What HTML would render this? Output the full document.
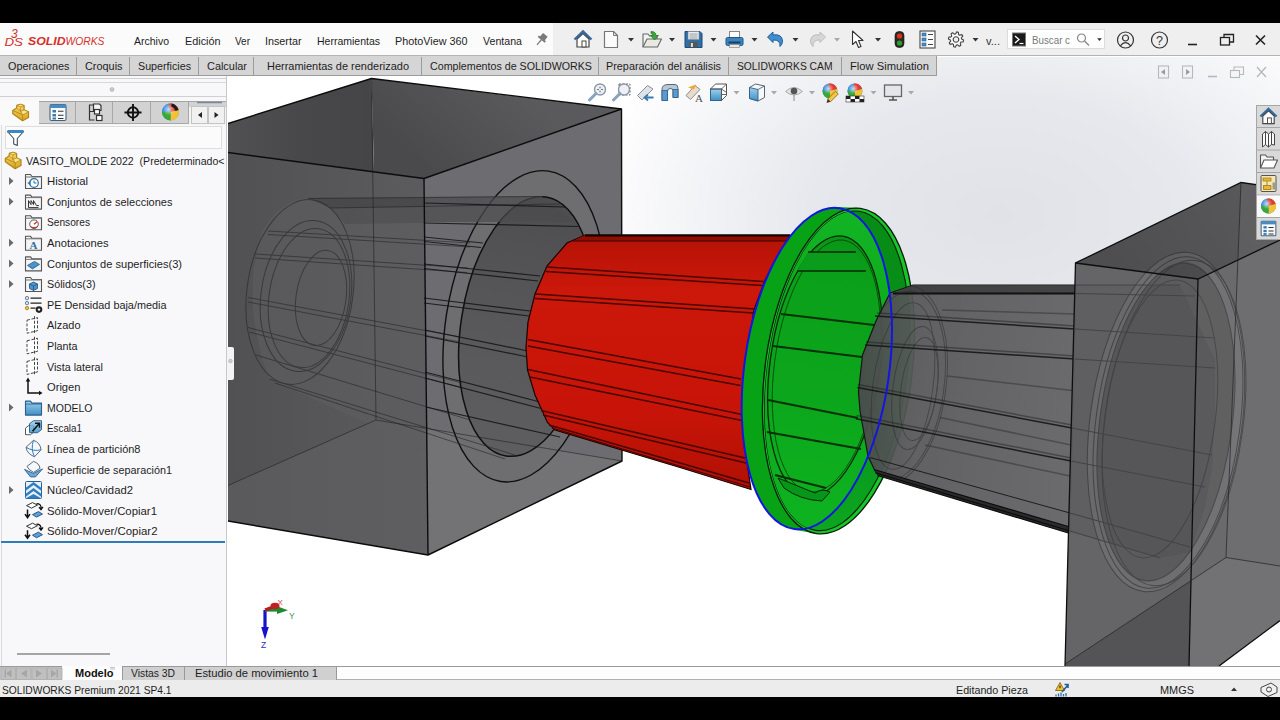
<!DOCTYPE html>
<html lang="es">
<head>
<meta charset="utf-8">
<title>SOLIDWORKS Premium 2021 - VASITO_MOLDE 2022</title>
<style>
html,body{margin:0;padding:0;width:1280px;height:720px;overflow:hidden;background:#000;}
body{position:relative;font-family:"Liberation Sans",sans-serif;}
.abs{position:absolute;}
.t{position:absolute;white-space:pre;transform-origin:0 50%;font-family:"Liberation Sans",sans-serif;}
#app{position:absolute;left:0;top:23px;width:1280px;height:674px;background:#fff;overflow:hidden;}
#menubar{position:absolute;left:0;top:23px;width:1280px;height:33px;background:#efefef;border-bottom:1px solid #b4b4b4;box-sizing:border-box;}
#menuleft{position:absolute;left:0;top:0;width:553px;height:32px;background:#fbfbfb;}
#search{position:absolute;left:1007px;top:6px;width:98px;height:20px;background:#fff;border:1px solid #dcdcdc;box-sizing:border-box;}
#cmtabs{position:absolute;left:0;top:56px;width:937px;height:20px;background:#d5d5d5;border-bottom:1px solid #9c9c9c;border-right:1px solid #9c9c9c;box-sizing:border-box;}
.sep{position:absolute;top:57px;width:1px;height:18px;background:#9c9c9c;}
#panel{position:absolute;left:0;top:76px;width:227px;height:590px;background:#f8f8fa;border-right:1px solid #c8c8c8;box-sizing:border-box;}
#ptabs{position:absolute;left:0;top:101px;width:226px;height:24px;background:#f4f4f4;}
.ptab{position:absolute;top:101px;height:23px;background:#d2d2d2;border-right:1px solid #a8a8a8;border-bottom:1px solid #a8a8a8;box-sizing:border-box;}
#filter{position:absolute;left:5px;top:126px;width:217px;height:23px;background:#fbfbfc;border:1px solid #dedede;box-sizing:border-box;}
#rollback{position:absolute;left:1px;top:541px;width:224px;height:2px;background:#2e7dba;}
#btabs{position:absolute;left:0;top:666px;width:1280px;height:14px;background:#fdfdfd;border-top:1px solid #9a9a9a;border-bottom:1px solid #b0b0b0;box-sizing:border-box;}
.btab{position:absolute;top:667px;height:13px;background:#d0d0d0;border-right:1px solid #9a9a9a;box-sizing:border-box;}
#status{position:absolute;left:0;top:680px;width:1280px;height:17px;background:#ececec;}
#taskpane{position:absolute;left:1256px;top:105px;width:24px;height:135px;background:#d9d9d9;border-left:1px solid #a6a6a6;border-top:1px solid #a6a6a6;border-bottom:1px solid #a6a6a6;box-sizing:border-box;}
#scene{position:absolute;left:0;top:0;}
#icons{position:absolute;left:0;top:0;pointer-events:none;}
</style>
</head>
<body>
<div id="app"></div>
<svg id="scene" width="1280" height="720" viewBox="0 0 1280 720">
<defs>
<radialGradient id="bgspot" gradientUnits="userSpaceOnUse" cx="1000" cy="215" r="420" gradientTransform="translate(1000 215) scale(1 0.62) translate(-1000 -215)"><stop offset="0" stop-color="#e0e2e8"/><stop offset="0.45" stop-color="#e6e8ed"/><stop offset="1" stop-color="#ffffff"/></radialGradient>
<linearGradient id="bgfade" x1="0" y1="0" x2="0" y2="1"><stop offset="0" stop-color="#fff" stop-opacity="0"/><stop offset="0.55" stop-color="#fff" stop-opacity="0"/><stop offset="0.78" stop-color="#fff" stop-opacity="1"/></linearGradient>
<linearGradient id="lbTopL" x1="0" y1="0" x2="1" y2="0"><stop offset="0" stop-color="#515153"/><stop offset="0.5" stop-color="#48484a"/><stop offset="1" stop-color="#454547"/></linearGradient>
<linearGradient id="lbTopR" gradientUnits="userSpaceOnUse" x1="520" y1="90" x2="440" y2="180"><stop offset="0" stop-color="#5a5a5c"/><stop offset="1" stop-color="#4a4a4c"/></linearGradient>
<linearGradient id="lbFront" x1="0" y1="0" x2="1" y2="0"><stop offset="0" stop-color="#515154"/><stop offset="1" stop-color="#5c5c5f"/></linearGradient>
<linearGradient id="redG" x1="0" y1="0" x2="0" y2="1"><stop offset="0" stop-color="#b41206"/><stop offset="0.22" stop-color="#cb180a"/><stop offset="0.7" stop-color="#c81408"/><stop offset="1" stop-color="#b01004"/></linearGradient>
<linearGradient id="innerWall" gradientUnits="userSpaceOnUse" x1="0" y1="210" x2="0" y2="530"><stop offset="0" stop-color="#078c16"/><stop offset="0.55" stop-color="#08921a"/><stop offset="1" stop-color="#0ca620"/></linearGradient>
<linearGradient id="interiorG" gradientUnits="userSpaceOnUse" x1="0" y1="210" x2="0" y2="530"><stop offset="0" stop-color="#088e14"/><stop offset="0.2" stop-color="#0ba01a"/><stop offset="0.6" stop-color="#0ca61c"/><stop offset="1" stop-color="#0eb420"/></linearGradient>
<linearGradient id="coreG" gradientUnits="userSpaceOnUse" x1="858" y1="0" x2="1076" y2="0"><stop offset="0" stop-color="#4a4a4c"/><stop offset="0.25" stop-color="#58585a"/><stop offset="1" stop-color="#626264"/></linearGradient>
<linearGradient id="rbTop" gradientUnits="userSpaceOnUse" x1="1120" y1="270" x2="1240" y2="190"><stop offset="0" stop-color="#4e4e50"/><stop offset="1" stop-color="#58585a"/></linearGradient>
<linearGradient id="cavG" gradientUnits="userSpaceOnUse" x1="0" y1="200" x2="0" y2="460"><stop offset="0" stop-color="#4e4e50"/><stop offset="0.5" stop-color="#58585a"/><stop offset="1" stop-color="#5e5e60"/></linearGradient>
<clipPath id="clipInset"><ellipse cx="837.2" cy="370.8" rx="69.8" ry="161" transform="rotate(7.7 837.2 370.8)"/></clipPath>
<linearGradient id="wallG" gradientUnits="userSpaceOnUse" x1="0" y1="210" x2="0" y2="530"><stop offset="0" stop-color="#12b424"/><stop offset="0.4" stop-color="#0ca81c"/><stop offset="1" stop-color="#0eb220"/></linearGradient>
<clipPath id="clipCore"><path d="M913,285 L1076,285 L1070,531 L876,473 L868,456 L860,411 L858.5,392 L862.5,355 L876,321 L890,293 Z"/></clipPath>
<clipPath id="vp"><rect x="228" y="57" width="1052" height="609"/></clipPath>
<clipPath id="clipE1"><ellipse cx="816.8" cy="368.6" rx="72.4" ry="162" transform="rotate(8 816.8 368.6)"/></clipPath>
<clipPath id="clipE2"><ellipse cx="838.5" cy="371" rx="73.5" ry="164" transform="rotate(7.7 838.5 371)"/></clipPath>
<clipPath id="clipE2in"><ellipse cx="837.9" cy="371" rx="69.2" ry="161" transform="rotate(7.7 837.9 371)"/></clipPath>
<clipPath id="clipLBleft"><polygon points="228,152.5 424,178.5 428,555 228,521"/></clipPath>
<clipPath id="clipLBright"><polygon points="424,178.5 621.5,109 622,461 428,555"/></clipPath>
</defs>
<g clip-path="url(#vp)">
<rect x="227" y="57" width="1053" height="609" fill="url(#bgspot)"/>
<rect x="227" y="57" width="1053" height="609" fill="url(#bgfade)"/>

<!-- LEFT BOX -->
<g id="leftbox" stroke-linejoin="round">
<polygon points="228,123.5 371.5,78.5 374,172 228,152.5" fill="url(#lbTopL)"/>
<polygon points="371.5,78.5 621.5,109 424,178.5 374,172" fill="url(#lbTopR)"/>
<polygon points="228,152.5 424,178.5 428,555 228,521" fill="url(#lbFront)"/>
<polygon points="424,178.5 621.5,109 622,461 428,555" fill="#6d6c70"/>
<!-- bottom face seen through -->
<polygon points="228,485.5 376,420 427,428.5 428,555 228,521" fill="#606063" opacity="0.6"/>
<polygon points="427,428.5 622,461 428,555" fill="#767678" opacity="0.7"/>
<!-- cavity tube seen through left face -->
<g clip-path="url(#clipLBleft)">
<path d="M308,198 L470,197 L470,470 L269,379 Q240,300 262,232 Q280,200 308,198 Z" fill="#5e5e60" opacity="0.55"/>
<path d="M308,198 L470,197 L470,207 L330,208 Z" fill="#3e3e40" opacity="0.6"/>
<path d="M330,208 L470,207 L470,222 L345,224 Z" fill="#4a4a4c" opacity="0.5"/>
</g>
<!-- cavity mouth on right face -->
<ellipse cx="524.6" cy="326.3" rx="79" ry="157" transform="rotate(8.8 524.6 326.3)" fill="#6e6e71" stroke="#101010" stroke-width="1.4"/>
<ellipse cx="526" cy="326.5" rx="65" ry="131" transform="rotate(8.8 526 326.5)" fill="url(#cavG)" stroke="#101010" stroke-width="1.5"/>
<g clip-path="url(#clipLBright)">
<path d="M424,197 L541,196 L575,222 L424,222 Z" fill="#4c4c4e" opacity="0.7"/>
</g>
<!-- hidden cavity lines -->
<g fill="none" stroke="#262628" stroke-width="1" opacity="0.6">
<ellipse cx="300" cy="292" rx="53" ry="93" transform="rotate(8 300 292)"/>
<ellipse cx="306" cy="296" rx="45" ry="76" transform="rotate(8 306 296)"/>
<ellipse cx="309" cy="298" rx="40" ry="70" transform="rotate(8 309 298)"/>
<ellipse cx="321" cy="298" rx="25" ry="48" transform="rotate(8 321 298)"/>
<line x1="308" y1="198.5" x2="540" y2="196.5"/>
<line x1="330" y1="208" x2="560" y2="204"/>
<line x1="268" y1="231" x2="470" y2="243"/><line x1="268" y1="234.5" x2="470" y2="247"/>
<line x1="255.5" y1="254" x2="468" y2="268"/><line x1="255" y1="258" x2="467" y2="272.5"/>
<line x1="248" y1="297.5" x2="460" y2="337"/><line x1="248" y1="302" x2="460" y2="342"/>
<line x1="248" y1="327.5" x2="462" y2="383"/><line x1="249" y1="332" x2="463" y2="388"/>
<line x1="256" y1="355" x2="470" y2="420"/>
<line x1="269" y1="379" x2="515" y2="455"/><line x1="275" y1="383" x2="505" y2="459"/>
</g>
<!-- lines inside mouth on right face -->
<g fill="none" stroke="#141416" stroke-width="1.2" opacity="0.85">
<line x1="424" y1="203" x2="565" y2="207"/>
<line x1="424" y1="223" x2="578" y2="226.5"/>
<line x1="424" y1="237" x2="483" y2="243"/><line x1="424" y1="241.5" x2="481" y2="247.5"/>
<line x1="424" y1="264" x2="540" y2="276"/><line x1="424" y1="268.5" x2="538" y2="281"/>
<line x1="424" y1="298" x2="530" y2="311"/><line x1="424" y1="303" x2="529" y2="316"/>
<line x1="425" y1="330" x2="528" y2="351"/><line x1="425" y1="336" x2="528" y2="357"/>
<line x1="425" y1="372" x2="540" y2="402"/><line x1="425" y1="378" x2="543" y2="409"/>
<line x1="426" y1="407" x2="560" y2="437"/>
</g>
<!-- edges -->
<g fill="none" stroke="#0c0c0c" stroke-width="1.4">
<polyline points="228,123.5 371.5,78.5 621.5,109 622,461 428,555 228,521"/>
<polyline points="228,152.5 424,178.5 621.5,109"/>
<line x1="424" y1="178.5" x2="428" y2="555"/>
</g>
<g fill="none" stroke="#1c1c1e" stroke-width="1" opacity="0.55">
<line x1="371.5" y1="78.5" x2="376" y2="420"/>
<line x1="376" y1="420" x2="228" y2="485.5"/>
<line x1="376" y1="420" x2="622" y2="461"/>
</g>
</g>

<!-- RED CUP -->
<g id="red">
<path d="M585,235 L790,235 L765,280 L754,310 L744,375 L742,420 L746,455 L751,489.5 L680,467.5 L555,430 L547.5,422.5 L535,395 L527.5,370 L526,347 L528,322 L535,294 L547,266 L567,243 Z" fill="url(#redG)" stroke="#1a0000" stroke-width="1.2"/>
<g fill="none" stroke="#480600" stroke-width="1.7">
<line x1="547.5" y1="267" x2="763.5" y2="281.5"/><line x1="546" y1="271.5" x2="762" y2="285.5"/>
<line x1="536" y1="294" x2="755" y2="309"/><line x1="535" y1="298.5" x2="753.5" y2="313"/>
<line x1="528" y1="339.5" x2="741" y2="379"/><line x1="528" y1="346" x2="740.5" y2="385.5"/>
<line x1="528" y1="369.5" x2="742" y2="414.5"/><line x1="530" y1="377" x2="742" y2="420.5"/>
<line x1="541" y1="410.5" x2="745" y2="458"/><line x1="543" y1="415" x2="746" y2="463"/>
<line x1="549" y1="425" x2="749" y2="483"/>
<line x1="552" y1="428" x2="750" y2="487" stroke-width="1.2"/>
</g>
<path d="M585,235 L790,235 L787,241 L573,241 Z" fill="#8e0e04"/><line x1="573" y1="241" x2="787" y2="241" stroke="#3a0400" stroke-width="1"/><line x1="585" y1="235.5" x2="790" y2="235.5" stroke="#100000" stroke-width="2.2"/>
</g>

<!-- GREEN CUP RIM -->
<g id="green">
<path d="M838,207 L860,208 L818,534 L796,530 Z" fill="#06a214"/>
<ellipse cx="816.8" cy="368.6" rx="72.4" ry="162" transform="rotate(8 816.8 368.6)" fill="#07a216"/>
<ellipse cx="838.5" cy="371" rx="73.5" ry="164" transform="rotate(7.7 838.5 371)" fill="#18c62a" stroke="#0a1a0a" stroke-width="1.3"/>
<ellipse cx="837.2" cy="370.8" rx="69.8" ry="161" transform="rotate(7.7 837.2 370.8)" fill="url(#innerWall)" stroke="#052005" stroke-width="1.1"/>
<!-- interior -->
<g clip-path="url(#clipInset)">
<ellipse cx="816.8" cy="368.6" rx="72.4" ry="162" transform="rotate(8 816.8 368.6)" fill="url(#wallG)"/>
<g clip-path="url(#clipE1)">
<!-- cup base ellipse -->
<ellipse cx="825" cy="366" rx="55" ry="131" transform="rotate(7.7 825 366)" fill="url(#interiorG)" stroke="#052805" stroke-width="1.3"/>
<ellipse cx="826.500" cy="366" rx="52" ry="127" transform="rotate(7.7 826.500 366)" fill="none" stroke="#052805" stroke-width="0.9" opacity="0.7"/>
<path d="M808,252 L856,252 L866,271 L797,271 Z" fill="#0a9c1a"/>
<path d="M808,252 H856 M797,271 H866" stroke="#042804" stroke-width="1.6" fill="none"/>
<path d="M778,478 L815,493 Q822,488 830,492 L822,501 Q800,500 784,488 Z" fill="#07951a" stroke="#042804" stroke-width="1"/>
</g>
</g>
<!-- flute lines inside -->
<g fill="none" stroke="#043004" stroke-width="1.9">
<line x1="781" y1="314" x2="874" y2="325"/>
<line x1="773" y1="346" x2="862" y2="357"/>
<line x1="768" y1="400" x2="858" y2="418"/>
<line x1="767" y1="432" x2="861" y2="449"/>
<line x1="775" y1="475" x2="826" y2="488"/>
</g>
</g>

<!-- RIGHT CORE + BOX -->
<g id="rightcore">
<path d="M913,285 L1076,285 L1070,531 L876,473 L868,456 L860,411 L858.5,392 L862.5,355 L876,321 L890,293 Z" fill="url(#coreG)" fill-opacity="0.94" stroke="#161616" stroke-width="1.2"/>
<path d="M913,285 L1076,285 L1076,293.500 L893,293.500 Z" fill="#38383a" opacity="0.75"/>
<line x1="893" y1="293.5" x2="1076" y2="293.5" stroke="#111" stroke-width="2"/>
<!-- end-face rings -->
<g fill="none" stroke="#2c2c2e" stroke-width="1" opacity="0.5" clip-path="url(#clipCore)">
<ellipse cx="898" cy="385" rx="48" ry="100" transform="rotate(7.7 898 385)"/>
<ellipse cx="900" cy="385.500" rx="44" ry="95" transform="rotate(7.7 900 385.500)"/>
<ellipse cx="903" cy="386" rx="30" ry="84" transform="rotate(7.7 903 386)"/>
<ellipse cx="915" cy="388" rx="22" ry="62" transform="rotate(7.7 915 388)"/>
<ellipse cx="919" cy="389" rx="18" ry="52" transform="rotate(7.7 919 389)"/>
</g>
<g fill="none" stroke="#2a2a2c" stroke-width="1.6" opacity="0.45">
<line x1="942" y1="310" x2="1075" y2="314"/>
<line x1="947" y1="376" x2="1072" y2="390.500"/>
<line x1="940" y1="417.500" x2="1071" y2="445"/>
<line x1="925" y1="445" x2="1070" y2="476"/>
</g>
<g fill="none" stroke="#161616" stroke-width="1.5" opacity="0.9">
<line x1="875" y1="316" x2="1075" y2="329"/><line x1="877" y1="313" x2="1075" y2="326" opacity="0.45"/>
<line x1="865" y1="345" x2="1075" y2="359"/><line x1="866" y1="342" x2="1075" y2="356" opacity="0.45"/>
<line x1="857.500" y1="387.500" x2="1072" y2="428"/><line x1="858" y1="384.500" x2="1072" y2="425" opacity="0.45"/>
<line x1="856" y1="418.750" x2="1071" y2="461"/><line x1="856.500" y1="415.500" x2="1071" y2="458" opacity="0.45"/>
<line x1="870" y1="457.500" x2="1070" y2="513" stroke-width="1"/>
</g>
<path d="M874,469.5 L1070,527 L1070,533.5 L877.5,475.5 Z" fill="#2a2a2c"/><path d="M876,473 L1070,531 M874,469.500 L1070,527 M877.500,475.500 L1070,533.500" stroke="#0c0c0c" stroke-width="1.2" fill="none"/>
</g>
<!-- parting line -->
<ellipse cx="816.8" cy="368.6" rx="72.4" ry="162" transform="rotate(8 816.8 368.6)" fill="none" stroke="#1414e4" stroke-width="2"/>
<g id="rightbox">
<polygon points="1075.5,263 1241,182.5 1280,188 1280,240 1198,279" fill="url(#rbTop)"/>
<polygon points="1241,182.5 1280,188 1280,240 1237.500,260.500" fill="#626264" opacity="0.7"/>
<polygon points="1075.5,263 1198,279 1189,666 1065,666" fill="#606062" fill-opacity="0.97"/>
<polygon points="1198,279 1280,240 1280,620.600 1219,666 1189,666" fill="#6a6a6c"/>
<polygon points="1237.500,260.500 1280,240 1280,566 1226,557.500" fill="#727274" opacity="0.6"/>
<polygon points="1065,664 1191,580.600 1189,666 1065,666" fill="#4a4a4c" opacity="0.6"/>
<polygon points="1191,580.600 1226,557.500 1280,566 1280,620.600 1219,666 1189,666" fill="#78787a" opacity="0.6"/>
<!-- core inside the box -->
<polygon points="1076,285 1180,285 1215,360 1215,407 1212,468 1205,507 1190,552 1160,558 1070,531" fill="#505052" opacity="0.25"/>
<g fill="none" stroke="#2a2a2c" opacity="0.5">
<ellipse cx="1166" cy="422" rx="66" ry="160" transform="rotate(7.700 1166 422)" fill="#2a2a2c" fill-opacity="0.3" stroke="none"/>
<ellipse cx="1166" cy="422" rx="71" ry="166" transform="rotate(7.700 1166 422)" stroke-width="9" stroke="#9a9a9c" opacity="0.350"/>
<ellipse cx="1166" cy="422" rx="76" ry="171" transform="rotate(7.700 1166 422)" stroke-width="1"/>
<ellipse cx="1168" cy="422.500" rx="72" ry="167" transform="rotate(7.700 1168 422.500)" stroke-width="1"/>
<ellipse cx="1166" cy="422" rx="66" ry="160" transform="rotate(7.700 1166 422)" stroke-width="1"/>
<ellipse cx="1174" cy="423" rx="69" ry="164" transform="rotate(7.700 1174 423)" stroke-width="1"/>
<ellipse cx="1160" cy="419" rx="55" ry="140" transform="rotate(7.700 1160 419)" stroke-width="1"/>
<g stroke-width="1.2">
<line x1="1076" y1="285" x2="1180" y2="285"/>
<line x1="1076" y1="293.5" x2="1195" y2="296"/>
<line x1="1075" y1="329" x2="1215" y2="338"/>
<line x1="1075" y1="359" x2="1215" y2="368"/>
<line x1="1072" y1="428" x2="1212" y2="455"/>
<line x1="1071" y1="461" x2="1205" y2="487"/>
<line x1="1070" y1="513" x2="1190" y2="547"/>
<line x1="1070" y1="531" x2="1160" y2="558"/>
</g>
</g>
<g fill="none" stroke="#0e0e0e" stroke-width="1.3">
<polyline points="1065,666 1075.5,263 1241,182.5 1280,188"/>
<polyline points="1075.5,263 1198,279 1280,240"/>
<line x1="1198" y1="279" x2="1189" y2="666"/>
<line x1="1219" y1="666" x2="1280" y2="620.600"/>
</g>
<g fill="none" stroke="#222" stroke-width="1" opacity="0.7">
<line x1="1241" y1="182.5" x2="1226" y2="557.5"/>
<line x1="1226" y1="557.5" x2="1065" y2="664"/>
<line x1="1226" y1="557.5" x2="1280" y2="566"/>
</g>
</g>
</g>
</g>
</svg>

<div id="menubar"><div id="menuleft"></div><div id="search"></div></div>
<div id="cmtabs"></div>
<div class="sep" style="left:76px"></div><div class="sep" style="left:129px"></div><div class="sep" style="left:198px"></div>
<div class="sep" style="left:253px"></div><div class="sep" style="left:421px"></div><div class="sep" style="left:598px"></div>
<div class="sep" style="left:728px"></div><div class="sep" style="left:841px"></div>
<div id="panel"></div>
<div class="abs" style="left:0;top:78px;width:226px;height:1px;background:#d0d0d0"></div>
<div class="abs" style="left:0;top:82px;width:226px;height:1px;background:#d8d8d8"></div>
<div class="abs" style="left:0;top:96px;width:226px;height:1px;background:#d0d0d0"></div>
<div class="abs" style="left:1px;top:125px;width:1px;height:541px;background:#dcdcdc"></div>
<div id="ptabs"></div>
<div class="abs" style="left:0;top:101px;width:39px;height:24px;background:#fafafa"></div>
<div class="ptab" style="left:39px;width:37px"></div>
<div class="ptab" style="left:76px;width:37px"></div>
<div class="ptab" style="left:113px;width:38px"></div>
<div class="ptab" style="left:151px;width:38px"></div>
<div class="abs" style="left:189px;top:101px;width:37px;height:6px;background:#d2d2d2"></div>
<div class="abs" style="left:191px;top:106px;width:17px;height:18px;background:#f1f1f1;border:1px solid #c4c4c4;box-sizing:border-box"></div>
<div class="abs" style="left:208px;top:106px;width:17px;height:18px;background:#f1f1f1;border:1px solid #c4c4c4;box-sizing:border-box"></div>
<div class="abs" style="left:39px;top:101px;width:187px;height:1px;background:#a4a4a4"></div>
<div id="filter"></div>
<div id="rollback"></div>
<div class="abs" style="left:227px;top:347px;width:7px;height:33px;background:#f4f4f6;border-radius:0 2px 2px 0"></div>
<div id="btabs"></div>
<div class="abs" style="left:0;top:667px;width:62px;height:13px;background:#c9c9c9"></div>
<div class="abs" style="left:62px;top:666px;width:60px;height:14px;background:#fdfdfd"></div>
<div class="btab" style="left:122px;width:63px;border-left:1px solid #9a9a9a"></div>
<div class="btab" style="left:185px;width:152px"></div>
<div id="status"></div>
<div id="taskpane"></div>
<svg id="icons" width="1280" height="720" viewBox="0 0 1280 720" font-family="'Liberation Sans',sans-serif">
<defs>
<radialGradient id="ball" cx="0.4" cy="0.35" r="0.7"><stop offset="0" stop-color="#fff" stop-opacity="0.7"/><stop offset="0.5" stop-color="#fff" stop-opacity="0"/></radialGradient>
<linearGradient id="ylw" x1="0" y1="0" x2="0" y2="1"><stop offset="0" stop-color="#f7d667"/><stop offset="1" stop-color="#d9a520"/></linearGradient>
<linearGradient id="blu" x1="0" y1="0" x2="0" y2="1"><stop offset="0" stop-color="#9fd0ee"/><stop offset="1" stop-color="#3f8fc6"/></linearGradient>
<g id="dd"><path d="M-3,-1.5 L3,-1.5 L0,2 Z" fill="#333"/></g>
<g id="ddl"><path d="M-3,-1.5 L3,-1.5 L0,2 Z" fill="#a8a8a8"/></g>
<g id="exp"><path d="M-2,-4 L2.5,0 L-2,4 Z" fill="#6a6a6a"/></g>
<g id="folder"><path d="M-8,-6.5 L-3,-6.5 L-1.5,-4.5 L8,-4.5 L8,7.5 L-8,7.5 Z" fill="#f4f4f4" stroke="#555" stroke-width="1.1" stroke-linejoin="round"/><path d="M-8,-4 L8,-4" stroke="#777" stroke-width="1"/></g>
<g id="part"><path d="M-7.700,-2.100 L-4.100,-4.300 L-3.600,-7.200 L0,-8.200 L3.600,-6.900 L3.600,-2.500 L8,-0.700 L8,4.900 L2.100,8.200 L-7.700,1.300 Z" fill="url(#ylw)" stroke="#b08414" stroke-width="1.200" stroke-linejoin="round"/><path d="M-3.600,-7.200 L-0.200,-5.600 L3.600,-6.900 L0,-8.200 Z M-7.700,-2.100 L-4.100,-4.300 L-0.500,-2.600 L2.100,2.400 L8,-0.700 L3.600,-2.500 L-0.200,-1 L-0.200,-5.600" fill="#fbe38a" stroke="#b08414" stroke-width="0.700" stroke-linejoin="round"/><path d="M2.100,2.400 L2.100,8.200 M-7.700,-2.100 L2.100,2.400" fill="none" stroke="#b08414" stroke-width="0.800"/></g>
<g id="plane"><path d="M-6.5,-5 L4,-7.5 L4,5.5 L-6.5,8 Z" fill="#fff" stroke="#444" stroke-width="1" stroke-dasharray="3 1.6"/><path d="M1,-9 L1,9" stroke="#444" stroke-width="1" stroke-dasharray="3 1.6"/></g>
<g id="colorball"><circle r="8.5" fill="#3d8fd8"/><path d="M0,0 L-8.5,0 A8.5,8.5 0 0 1 -2,-8.3 Z" fill="#3d8fd8"/><path d="M0,0 L-2,-8.3 A8.5,8.5 0 0 1 8.2,-2.2 Z" fill="#e23a2e"/><path d="M0,0 L8.2,-2.2 A8.5,8.5 0 0 1 0,8.5 Z" fill="#f2c230"/><path d="M0,0 L0,8.5 A8.5,8.5 0 0 1 -8.5,0 Z" fill="#38a838"/><circle r="8.5" fill="url(#ball)"/></g>
<g id="mag"><circle cx="3" cy="-3" r="5.5" fill="#edf1f5" stroke="#8c98a6" stroke-width="1.4"/><path d="M-1,1 L-7.5,7.5" stroke="#86a4be" stroke-width="3" stroke-linecap="round"/></g>
<g id="mover"><path d="M-7,-5 L-1,-8 L4,-5.5 L-2,-2.5 Z" fill="#fff" stroke="#333" stroke-width="1"/><path d="M-1,4 L5,1 L9,3.5 L3,6.5 Z" fill="#5aa0d8" stroke="#2a5a88" stroke-width="1"/><path d="M-6,-1 L-6,6 M-8.5,3.5 L-6,7 L-3.5,3.5" fill="none" stroke="#111" stroke-width="1.5"/><path d="M3,-7 Q8,-7 7.5,-2 M5.5,-3.5 L7.5,-1 L9.5,-3.8" fill="none" stroke="#111" stroke-width="1.3"/></g>
</defs>
<g fill="#d5302a" font-style="italic"><text x="11" y="37.5" font-size="12" font-weight="400">3</text><text x="4.5" y="46" font-size="11.5" font-weight="400" textLength="18.5" lengthAdjust="spacingAndGlyphs">DS</text>
<text x="28" y="44.6" font-size="11.8" font-weight="700" textLength="37.5" lengthAdjust="spacingAndGlyphs">SOLID</text><text x="65.5" y="44.6" font-size="11.8" font-weight="400" textLength="39" lengthAdjust="spacingAndGlyphs">WORKS</text></g>
<g transform="translate(541.5,39.5) rotate(40)" fill="#7a7a7a"><rect x="-3" y="-6" width="6" height="5"/><rect x="-4.5" y="-1.5" width="9" height="2"/><rect x="-0.6" y="0" width="1.2" height="7"/></g>
<g transform="translate(583,39.5)"><path d="M-8.5,0 L0,-8 L8.5,0" fill="none" stroke="#2f6ea5" stroke-width="2.4" stroke-linejoin="miter"/><path d="M-6,-0.5 L-6,7.5 L6,7.5 L6,-0.5 L0,-6 Z" fill="#fdfdfd" stroke="#444" stroke-width="1.2"/><rect x="-1" y="1.5" width="4" height="6" fill="#fff" stroke="#444" stroke-width="1"/></g>
<g transform="translate(611,39.5)"><path d="M-6.5,-8 L2.5,-8 L6.5,-4 L6.5,8 L-6.5,8 Z" fill="#fbfbfb" stroke="#777" stroke-width="1.2" stroke-linejoin="round"/><path d="M2.5,-8 L2.5,-4 L6.5,-4" fill="none" stroke="#777" stroke-width="1"/></g>
<use href="#dd" x="631" y="39.5"/>
<g transform="translate(652,39.5)"><path d="M-9,7.5 L-9,-5.5 L-4,-5.5 L-2.5,-3.5 L5,-3.5 L5,0" fill="#f2f2ee" stroke="#666" stroke-width="1.1" stroke-linejoin="round"/><path d="M-9,7.5 L-5,-0.5 L9.5,-0.5 L5.5,7.5 Z" fill="#e9e9e2" stroke="#666" stroke-width="1.1" stroke-linejoin="round"/><path d="M-1,-8 Q4,-8 4,-4 L6.5,-4 L2.5,0.5 L-1.5,-4 L1,-4 Q1,-6 -1,-6 Z" fill="#3aa83a" stroke="#1e6e1e" stroke-width="0.7"/></g>
<use href="#dd" x="672" y="39.5"/>
<g transform="translate(693.5,39.5)"><path d="M-8.5,-8 L6.5,-8 L8.5,-6 L8.5,8 L-8.5,8 Z" fill="#2f6fa8" stroke="#1d4a78" stroke-width="1"/><rect x="-5.5" y="-8" width="11" height="8" fill="#e8eef4" stroke="#888" stroke-width="0.6"/><path d="M-4,-5.5 H4 M-4,-3.5 H4 M-4,-1.5 H4" stroke="#8a8a8a" stroke-width="0.8"/><rect x="-4" y="2.5" width="8" height="5.5" fill="#555" /><rect x="-2.6" y="3.5" width="2" height="4" fill="#ddd"/></g>
<use href="#dd" x="713.5" y="39.5"/>
<g transform="translate(734.5,39.5)"><rect x="-5" y="-8" width="10" height="7" fill="#fff" stroke="#888" stroke-width="1"/><rect x="-8.5" y="-2" width="17" height="8" rx="1.5" fill="#3b84bd" stroke="#1f5687" stroke-width="1"/><rect x="-6" y="2" width="12" height="2" fill="#1c3f60"/><rect x="-5" y="5" width="10" height="3" fill="#e8e8e8" stroke="#888" stroke-width="0.7"/></g>
<use href="#dd" x="754.5" y="39.5"/>
<g transform="translate(776,39.5)"><path d="M-3,-4.5 Q6,-6 6.5,1.5 Q6.5,5 4,7 Q4.5,0 -3,0.5 L-3,3 L-8.5,-2.5 L-3,-7.5 Z" fill="#3f8fd0" stroke="#1f5d96" stroke-width="1" stroke-linejoin="round"/></g>
<use href="#dd" x="795.5" y="39.5"/>
<g transform="translate(817,39.5) scale(-1,1)"><path d="M-3,-4.5 Q6,-6 6.5,1.5 Q6.5,5 4,7 Q4.5,0 -3,0.5 L-3,3 L-8.5,-2.5 L-3,-7.5 Z" fill="#d6d6d6" stroke="#bdbdbd" stroke-width="1" stroke-linejoin="round"/></g>
<use href="#ddl" x="837" y="39.5"/>
<g transform="translate(858,39.5)"><path d="M-5.5,-8.5 L-5.5,5 L-2,2 L0.5,8 L3,7 L0.5,1 L5,1 Z" fill="#fff" stroke="#333" stroke-width="1.1" stroke-linejoin="round"/></g>
<use href="#dd" x="878" y="39.5"/>
<g transform="translate(899.5,39.5)"><rect x="-4.5" y="-8" width="9" height="16" rx="4" fill="#2c2a22" stroke="#111" stroke-width="0.6"/><circle cy="-3.5" r="2.6" fill="#e03020"/><circle cy="3.5" r="2.6" fill="#2aa02a"/></g>
<g transform="translate(927.5,39.5)"><rect x="-7.5" y="-8.5" width="15" height="17" fill="#fcfcfc" stroke="#444" stroke-width="1.1"/><rect x="-5.5" y="-6.5" width="4" height="3" fill="#4a90c8" stroke="#245a8a" stroke-width="0.6"/><rect x="-5.5" y="-1.5" width="4" height="3" fill="#4a90c8" stroke="#245a8a" stroke-width="0.6"/><rect x="-5.5" y="3.5" width="4" height="3" fill="#4a90c8" stroke="#245a8a" stroke-width="0.6"/><path d="M0.5,-5 H5.5 M0.5,0 H5.5 M0.5,5 H5.5" stroke="#444" stroke-width="1.2"/></g>
<g transform="translate(956,39.5)"><path d="M7.6,0.6 L7.2,2.4 L5.0,2.5 L4.3,3.6 L4.9,5.8 L3.4,6.8 L1.7,5.3 L0.4,5.6 L-0.6,7.6 L-2.4,7.2 L-2.5,5.0 L-3.6,4.3 L-5.8,4.9 L-6.8,3.4 L-5.3,1.7 L-5.6,0.4 L-7.6,-0.6 L-7.2,-2.4 L-5.0,-2.5 L-4.3,-3.6 L-4.9,-5.8 L-3.4,-6.8 L-1.7,-5.3 L-0.4,-5.6 L0.6,-7.6 L2.4,-7.2 L2.5,-5.0 L3.6,-4.3 L5.8,-4.9 L6.8,-3.4 L5.3,-1.7 L5.6,-0.4 Z" fill="#fafafa" stroke="#444" stroke-width="1.1" stroke-linejoin="round"/><circle r="2.8" fill="#efefef" stroke="#444" stroke-width="1.1"/></g>
<use href="#dd" x="975.5" y="39.5"/>
<g transform="translate(1019,39.5)"><rect x="-6.5" y="-6.5" width="13" height="13" fill="#1a1a1a" stroke="#777" stroke-width="1"/><path d="M-4,-3.5 L0,0 L-4,3.5" fill="none" stroke="#fff" stroke-width="1.3"/><path d="M0.5,4 H4.5" stroke="#fff" stroke-width="1.2"/></g>
<g transform="translate(1083,39.5)"><circle cx="-1.5" cy="-1.5" r="4" fill="none" stroke="#888" stroke-width="1.2"/><path d="M1.5,1.5 L6,6" stroke="#888" stroke-width="1.4"/></g>
<use href="#dd" x="1099.5" y="39.5" transform="translate(1099.5 39.5) scale(0.8) translate(-1099.5 -39.5)"/>
<g transform="translate(1125.5,40)" fill="none" stroke="#333" stroke-width="1.2"><circle r="8"/><circle cy="-2" r="3"/><path d="M-5.2,5.8 Q0,-0.5 5.2,5.8"/></g>
<g transform="translate(1159.5,40)"><circle r="8" fill="none" stroke="#333" stroke-width="1.2"/><text x="0" y="4.5" font-size="12.5" font-weight="400" text-anchor="middle" fill="#333">?</text></g>
<path d="M1188,44.5 H1197" stroke="#222" stroke-width="1.6"/>
<g fill="none" stroke="#222" stroke-width="1.3"><rect x="1220.5" y="37.5" width="9" height="7.5" fill="#efefef"/><path d="M1224,37.5 V34.5 H1233.5 V42 H1229.5"/></g>
<path d="M1256,35.5 L1265,44.5 M1265,35.5 L1256,44.5" stroke="#222" stroke-width="1.6"/>
<g fill="none" stroke="#b8b8bc" stroke-width="1.1"><rect x="1158.5" y="66" width="10" height="12"/><rect x="1182.5" y="66" width="10" height="12"/><rect x="1230.5" y="70.500" width="9" height="7"/><path d="M1234,70.5 V67 H1243.5 V74.500 H1239.5"/><path d="M1257,67 L1266,77 M1266,67 L1257,77" stroke-width="1.3"/><path d="M1208,76.5 H1217" stroke-width="1.6"/></g>
<path d="M1165,69 L1161,72 L1165,75 Z" fill="#9a9aa0"/><path d="M1186,69 L1190,72 L1186,75 Z" fill="#9a9aa0"/>
<g transform="translate(597,92.5)"><use href="#mag"/><path d="M3,-5.8 V-4.2 M3,-1.800 V-0.2 M0.200,-3 H1.800 M4.200,-3 H5.800" stroke="#555" stroke-width="1"/></g>
<g transform="translate(621,92.5)"><rect x="-2" y="-8.500" width="11" height="11" fill="none" stroke="#666" stroke-width="1" stroke-dasharray="2 1.500"/><use href="#mag"/></g>
<g transform="translate(645.5,92.5)"><path d="M-8,3 L2,-7 L7.500,-3.500 L-3.500,7.500 Z" fill="#dfe3e8" stroke="#8a8f96" stroke-width="1"/><path d="M-1,5 H8 M2.500,2 L-1,5 L2.500,8" fill="none" stroke="#3a78b0" stroke-width="1.800"/></g>
<g transform="translate(670,92.5)"><path d="M-8,-3 Q-8,-8 -2,-8 L5,-8 Q8,-8 8,-4 L8,5 L3,5 L3,-2 Q3,-4 0,-4 Q-2.500,-4 -2.500,-1 L-2.500,8 L-8,8 Z" fill="#b8c8d8" stroke="#566878" stroke-width="1"/><rect x="-8" y="-2" width="5.500" height="10" fill="#5a9ad0" stroke="#2f5f8a" stroke-width="0.800"/><rect x="3" y="-3" width="5" height="8" fill="#5a9ad0" stroke="#2f5f8a" stroke-width="0.800"/></g>
<g transform="translate(694,92.5)"><path d="M-8,3 L1,-7 L6,-3 L-3.500,7 Z" fill="#e8dcc8" stroke="#8a8f96" stroke-width="1"/><path d="M-6,-5 L2,-8 L0,-3 Z" fill="#f0a830"/><text x="1" y="9" font-size="11" font-family="'Liberation Serif',serif" fill="#555">A</text></g>
<g transform="translate(718.5,92.5)"><path d="M-8,-3.500 L-3,-8.500 L8,-8.500 L8,3 L3,8 L-8,8 Z" fill="#fff" stroke="#555" stroke-width="1"/><rect x="-8" y="-3.500" width="11" height="11.500" fill="url(#blu)" stroke="#2f5f8a" stroke-width="0.900"/><path d="M3,-3.500 L8,-8.500 M3,-3.500 H-8 M3,8 V-3.500 M3,2 L8,2 M3,-3.500 L8,0" fill="none" stroke="#555" stroke-width="0.900"/></g>
<use href="#ddl" x="736.5" y="92.5"/>
<g transform="translate(757,92.5)"><path d="M-7.500,-5 L-1.500,-8.500 L7.500,-6.500 L7.500,5 L1,8.500 L-7.500,6 Z" fill="#f6f8fa" stroke="#567" stroke-width="1"/><path d="M-7.500,-5 L1,-3 L1,8.500 L-7.500,6 Z" fill="url(#blu)" stroke="#2f5f8a" stroke-width="0.900"/><path d="M1,-3 L7.500,-6.500" stroke="#567" stroke-width="0.900"/></g>
<use href="#ddl" x="774" y="92.5"/>
<g transform="translate(794,92.5)"><path d="M-8.500,-1 Q0,-9 8.500,-1 Q0,6 -8.500,-1 Z" fill="#e4e4e6" stroke="#aaa" stroke-width="1"/><circle cy="-1.500" r="3.300" fill="#555"/><path d="M0,2 V8.500" stroke="#999" stroke-width="1.200"/></g>
<use href="#ddl" x="812" y="92.5"/>
<g transform="translate(830,91.0) scale(0.88)"><use href="#colorball"/></g><g transform="translate(834,95.5) rotate(-45)"><rect x="-7" y="-2" width="11" height="4" fill="#f2c64a" stroke="#8a6a10" stroke-width="0.800"/><path d="M-7,-2 L-10.500,0 L-7,2 Z" fill="#333"/></g>
<g transform="translate(855,91.0) scale(0.88)"><use href="#colorball"/></g><g transform="translate(855,99.0)"><rect x="-9" y="-3" width="18" height="6" fill="#fff" stroke="#333" stroke-width="0.600"/><path d="M-9,-3 h4.500 v3 h-4.500 Z M0,-3 h4.500 v3 h-4.500 Z M-4.500,0 h4.500 v3 h-4.500 Z M4.500,0 h4.500 v3 h-4.500 Z" fill="#222"/></g>
<use href="#ddl" x="873.5" y="92.5"/>
<g transform="translate(893,92.5)"><rect x="-8.500" y="-7.500" width="17" height="11.500" fill="#e6e6e8" stroke="#666" stroke-width="1.300"/><path d="M0,4 V7 M-4,7.500 H4" stroke="#555" stroke-width="1.600"/></g>
<use href="#ddl" x="911" y="92.5"/>
<circle cx="112" cy="89.500" r="2" fill="#c8c8c8" stroke="#aaa" stroke-width="0.600"/>
<circle cx="230.500" cy="361" r="1.800" fill="#d0d0d0" stroke="#a8a8a8" stroke-width="0.600"/>
<g transform="translate(20.500,112.500)"><use href="#part"/></g>
<g transform="translate(58,112.500)"><rect x="-8" y="-8" width="16" height="16" rx="1.500" fill="#f8fafc" stroke="#44607a" stroke-width="1.100"/><rect x="-8" y="-8" width="16" height="3.500" fill="#4a8cc0"/><rect x="-5.500" y="-2.500" width="3.500" height="2.500" fill="#3a78b0"/><rect x="-5.500" y="1.500" width="3.500" height="2.500" fill="#3a78b0"/><rect x="-5.500" y="5" width="3.500" height="2" fill="#3a78b0"/><path d="M0,-1.200 H5.500 M0,2.800 H5.500 M0,6 H5.500" stroke="#333" stroke-width="1.100"/></g>
<g transform="translate(95.500,112.500)" fill="none" stroke="#333" stroke-width="1.200"><path d="M-6,-8 V7.500 H-1 M-6,-1 H-1 M-6,-7.500 H-2"/><path d="M-2,-8.500 H4 L5.500,-7 V-2 H-2 Z" fill="#f4f4f4"/><rect x="-1" y="-3" width="5" height="4.500" fill="#fff"/><rect x="1" y="3" width="5.500" height="5" fill="#fff"/></g>
<g transform="translate(133,112.500)" fill="none" stroke="#111" stroke-width="1.900"><circle r="5.200"/><path d="M0,-8.500 V8.500 M-8.500,0 H8.500"/></g>
<g transform="translate(170.500,112)"><use href="#colorball"/><path d="M1,-7 Q5,-6 6.500,-1.500" stroke="#1a1a1a" stroke-width="3" fill="none"/></g>
<path d="M202,112 L198,115 L202,118 Z" fill="#222"/><path d="M214.500,112 L218.500,115 L214.500,118 Z" fill="#222"/>
<path d="M197,102.500 H222" stroke="#7a8a9a" stroke-width="1.500"/>
<g transform="translate(15.500,138)"><path d="M-8,-6.500 H8 L1.800,0.500 V7.500 L-1.800,6 V0.500 Z" fill="#fff" stroke="#3f4f5f" stroke-width="1.100" stroke-linejoin="round"/><path d="M-8,-6.500 H8" stroke="#3f86c0" stroke-width="3"/></g>
<g transform="translate(13,160.500)"><use href="#part"/></g>
<use href="#exp" x="11" y="181.0"/>
<use href="#exp" x="11" y="201.6"/>
<use href="#exp" x="11" y="242.8"/>
<use href="#exp" x="11" y="263.4"/>
<use href="#exp" x="11" y="284.0"/>
<use href="#exp" x="11" y="407.6"/>
<use href="#exp" x="11" y="490.0"/>
<g transform="translate(33.5,181.0)"><use href="#folder"/><circle cx="0.500" cy="2" r="4.300" fill="#fff" stroke="#2f6ea5" stroke-width="1.200"/><path d="M0.500,-0.500 V2 H3" fill="none" stroke="#2f6ea5" stroke-width="1"/><path d="M-6,2 L-3,4.500 L-3,0 Z" fill="#2f6ea5"/></g>
<g transform="translate(33.5,201.6)"><use href="#folder"/><path d="M-5,6 V-1 L-2.500,3 V-1 L0,3 V-1 L3,4 L5.500,4 M-5,6 H5" fill="none" stroke="#333" stroke-width="1"/></g>
<g transform="translate(33.5,222.2)"><use href="#folder"/><circle cx="0.500" cy="2" r="4.300" fill="#fff" stroke="#555" stroke-width="1"/><path d="M0.500,2 L3.500,-0.500" stroke="#d03020" stroke-width="1.300"/><path d="M-2.500,4.500 Q0.500,6.500 3.500,4.500" stroke="#d03020" stroke-width="1.200" fill="none"/></g>
<g transform="translate(33.5,242.8)"><use href="#folder"/><text x="0" y="6.500" font-size="11" font-weight="700" text-anchor="middle" fill="#2f6ea5" font-family="'Liberation Serif',serif">A</text></g>
<g transform="translate(33.5,263.4)"><use href="#folder"/><path d="M-6,2 L1,-2 L6,1 L-1,5.500 Z" fill="#4a94cc" stroke="#245a8a" stroke-width="0.800"/></g>
<g transform="translate(33.5,284.0)"><use href="#folder"/><path d="M-4,0 L0,-2 L4,0 L4,4.500 L0,6.500 L-4,4.500 Z" fill="#4a94cc" stroke="#1f4f7f" stroke-width="0.800"/><path d="M-4,0 L0,2 L4,0 M0,2 V6.500" fill="none" stroke="#1f4f7f" stroke-width="0.700"/></g>
<g transform="translate(33.5,304.6)"><path d="M-3,-6.500 H8 M-3,-1.500 H8 M-3,3.500 H2" stroke="#222" stroke-width="1.400"/><circle cx="-6.500" cy="-6.500" r="1.700" fill="#cfe0f0" stroke="#4a6a8a" stroke-width="0.800"/><circle cx="-6.500" cy="-1.500" r="1.700" fill="#cfe0f0" stroke="#4a6a8a" stroke-width="0.800"/><circle cx="-6.500" cy="3.500" r="1.700" fill="#f0c040" stroke="#a07a10" stroke-width="0.800"/><circle cx="5.500" cy="5" r="3.300" fill="#222"/><circle cx="5.500" cy="5" r="1.200" fill="#fff"/></g>
<g transform="translate(33.5,325.20000000000005)"><use href="#plane"/></g>
<g transform="translate(33.5,345.8)"><use href="#plane"/></g>
<g transform="translate(33.5,366.4)"><use href="#plane"/></g>
<g transform="translate(33.5,387.0)"><path d="M-5.500,-7 V6 H7" fill="none" stroke="#111" stroke-width="1.500"/><path d="M-5.500,-9.500 L-7.800,-5.500 H-3.200 Z M9,6 L5.500,3.800 V8.200 Z" fill="#111"/></g>
<g transform="translate(33.5,407.6)"><path d="M-8,-6.500 L-3,-6.500 L-1.500,-4.500 L8,-4.500 L8,7.500 L-8,7.500 Z" fill="url(#blu)" stroke="#2a5f90" stroke-width="1.100" stroke-linejoin="round"/><path d="M-8,-3.500 H8" stroke="#2a5f90" stroke-width="0.800"/></g>
<g transform="translate(33.5,428.20000000000005)"><path d="M-8,0 L-5,-2.500 L0,-2.500 L0,4 L-3,6.500 L-8,6.500 Z" fill="#fff" stroke="#444" stroke-width="0.900"/><path d="M-4,-4.500 L0,-7.500 L8,-7.500 L8,1.500 L4,4.500 L-4,4.500 Z" fill="url(#blu)" stroke="#245a8a" stroke-width="0.900" fill-opacity="0.850"/><path d="M-1,3 L5.500,-4.500 M1.500,-5 H6 V-0.500" fill="none" stroke="#111" stroke-width="1.500"/></g>
<g transform="translate(33.5,448.8)"><path d="M0,-8.500 Q7,-6 7.500,1 L1,8 Q-6.500,5 -7.500,-1.500 Z" fill="#f4f8fc" stroke="#5a6a7a" stroke-width="1"/><path d="M-7.500,-1.500 Q0,3 7.500,1 M0,-8.500 Q-3,0 1,8" fill="none" stroke="#3a78b0" stroke-width="1"/></g>
<g transform="translate(33.5,469.40000000000003)"><path d="M0,-8 Q6,-6 6.500,-1 L0,3 Q-5.500,0 -6.500,-3 Z" fill="#f4f8fc" stroke="#5a6a7a" stroke-width="1"/><path d="M-9,0 L0,4 L9,-0.500 L2,7.500 L-3,7.500 Z" fill="#6aa8d8" stroke="#2a5f90" stroke-width="0.900"/></g>
<g transform="translate(33.5,490.0)"><rect x="-8" y="-8.500" width="16" height="17" rx="1" fill="#e8f0f8" stroke="#2a5f90" stroke-width="1"/><path d="M-8,-2 L0,-8 L8,-2 L8,1 L0,-5 L-8,1 Z" fill="#2f7fc0"/><path d="M-8,4 L0,-2 L8,4 L8,7 L0,1 L-8,7 Z" fill="#2f7fc0"/><path d="M-8,8.500 L0,4 L8,8.500 Z" fill="#2f7fc0"/></g>
<g transform="translate(33.5,510.6)"><use href="#mover"/></g>
<g transform="translate(33.5,531.2)"><use href="#mover"/></g>
<path d="M17,654 H110" stroke="#8a8a8a" stroke-width="1.300"/>
<path d="M110,667.500 H115 M110,669 H115" stroke="#aaa" stroke-width="0.700"/>
<rect x="1" y="668" width="14.500" height="11.500" fill="#c0c0c0" stroke="#acacac" stroke-width="0.800"/>
<rect x="16.5" y="668" width="14.500" height="11.500" fill="#c0c0c0" stroke="#acacac" stroke-width="0.800"/>
<rect x="32" y="668" width="14.500" height="11.500" fill="#c0c0c0" stroke="#acacac" stroke-width="0.800"/>
<rect x="47.5" y="668" width="14.500" height="11.500" fill="#c0c0c0" stroke="#acacac" stroke-width="0.800"/>
<g fill="#a6a6a6"><path d="M11.500,669.500 L6,673.500 L11.500,677.500 Z"/><rect x="4.500" y="669.500" width="1.500" height="8"/><path d="M27,669.500 L21,673.500 L27,677.500 Z"/><path d="M36,669.500 L42,673.500 L36,677.500 Z"/><path d="M51,669.500 L56.500,673.500 L51,677.500 Z"/><rect x="56.500" y="669.500" width="1.500" height="8"/></g>
<g transform="translate(1061,689)"><path d="M-5.500,1.500 L-1,-6.500 L3.500,1.500 Z" fill="#f0c030" stroke="#7a5a00" stroke-width="0.800"/><path d="M-1,-3.500 V-0.800" stroke="#222" stroke-width="1.100"/><path d="M1,3 L6.500,-3.500 M3.500,-4.500 L7,-4.500 L7,-1" fill="none" stroke="#1f5f9a" stroke-width="1.600"/><path d="M-5,5.500 v2 M-2.500,4.500 v3 M0,3.500 v4 M2.500,5 v2.500 M5,4 v3.500" stroke="#2f6ea5" stroke-width="1.300"/></g>
<path d="M1231,691 L1234,687.500 L1237,691 Z" fill="#333"/>
<g transform="translate(1269,689.500)"><path d="M-8,-2 L2,-6.500 L8,-2.500 L8,3 L-1,7 L-8,2.500 Z" fill="#f0f0f0" stroke="#444" stroke-width="1"/><circle cx="0" cy="0" r="2.500" fill="none" stroke="#444" stroke-width="1"/></g>
<path d="M1256.500,127.500 H1280 M1256.500,150 H1280 M1256.500,172.500 H1280 M1256.500,195 H1280 M1256.500,217.500 H1280" stroke="#a6a6a6" stroke-width="1"/>
<rect x="1257" y="195.500" width="23" height="21.500" fill="#fafafa"/>
<g transform="translate(1268.5,116.500) scale(0.95)"><path d="M-8.500,0 L0,-8 L8.500,0" fill="none" stroke="#2f6ea5" stroke-width="2.400"/><path d="M-6,-0.500 L-6,7.500 L6,7.500 L6,-0.500 L0,-6 Z" fill="#fdfdfd" stroke="#444" stroke-width="1.200"/><rect x="-1" y="1.500" width="4" height="6" fill="#fff" stroke="#444" stroke-width="1"/></g>
<g transform="translate(1268.5,139)" fill="#fafafa" stroke="#444" stroke-width="1"><path d="M-6,-5 L-3,-7.500 L-3,5.500 L-6,8 Z M-3,-7.500 L0,-5 L0,8 L-3,5.500 M0,-5 L3,-7.500 L3,5.500 L0,8 M3,-7.500 L6,-5 L6,6 L3,5.500"/></g>
<g transform="translate(1268.5,161)"><path d="M-8,7 L-8,-6 L-3,-6 L-1.500,-4 L5,-4 L5,-1" fill="#f4f4f4" stroke="#555" stroke-width="1.100" stroke-linejoin="round"/><path d="M-8,7 L-4.500,-1 L9,-1 L5.500,7 Z" fill="#fff" stroke="#555" stroke-width="1.100" stroke-linejoin="round"/></g>
<g transform="translate(1268.5,183.500)"><rect x="-7.500" y="-8" width="15" height="16" rx="1" fill="#f6e6b0" stroke="#555" stroke-width="1"/><rect x="-5.500" y="-5.500" width="8" height="3" fill="#e8b830" stroke="#8a6a10" stroke-width="0.600"/><path d="M-1.500,-2.500 V2 H-5 V6 H2.500 V2 H-1" fill="#e8b830" stroke="#8a6a10" stroke-width="0.700"/><rect x="4" y="-1" width="2.500" height="7" fill="#999"/></g>
<g transform="translate(1268.5,206) scale(0.88)"><use href="#colorball"/></g>
<g transform="translate(1268.5,228.500) scale(0.92)"><rect x="-8" y="-8" width="16" height="16" rx="1" fill="#f8fafc" stroke="#44607a" stroke-width="1.100"/><rect x="-8" y="-8" width="16" height="3.500" fill="#4a8cc0"/><rect x="-5.500" y="-2.500" width="3.500" height="2.500" fill="#3a78b0"/><rect x="-5.500" y="1.500" width="3.500" height="2.500" fill="#3a78b0"/><rect x="-5.500" y="5" width="3.500" height="2" fill="#3a78b0"/><path d="M0,-1.200 H5.500 M0,2.800 H5.500 M0,6 H5.500" stroke="#333" stroke-width="1.100"/></g>
<g transform="translate(265,610)"><path d="M0,0 V20" stroke="#1414c8" stroke-width="3.2"/><path d="M-3.800,17 L0,29.500 L3.800,17 Z" fill="#1414c8"/><path d="M0,0 H14" stroke="#1e8a2e" stroke-width="3.200"/><path d="M12,-3.800 L23,0.300 L12,4 Z" fill="#1e8a2e"/><path d="M0,0 L8,-3" stroke="#b81e1e" stroke-width="3.200"/><ellipse cx="10" cy="-4" rx="4.500" ry="3.300" fill="#c02020"/><text x="12.500" y="-5" font-size="8" fill="#d04040">X</text><text x="24" y="8.500" font-size="8.500" fill="#3a9a4a">Y</text><text x="-4" y="38" font-size="8.500" fill="#3030b0">Z</text></g>
</svg>
<span class="t" style="left:134px;top:34.1px;font-size:11.3px;line-height:15px;font-weight:400;color:#1e1e1e;transform:scaleX(0.9291)">Archivo</span>
<span class="t" style="left:184.5px;top:34.1px;font-size:11.3px;line-height:15px;font-weight:400;color:#1e1e1e;transform:scaleX(0.9578)">Edición</span>
<span class="t" style="left:235px;top:34.1px;font-size:11.3px;line-height:15px;font-weight:400;color:#1e1e1e;transform:scaleX(0.8840)">Ver</span>
<span class="t" style="left:265px;top:34.1px;font-size:11.3px;line-height:15px;font-weight:400;color:#1e1e1e;transform:scaleX(0.9527)">Insertar</span>
<span class="t" style="left:317px;top:34.1px;font-size:11.3px;line-height:15px;font-weight:400;color:#1e1e1e;transform:scaleX(0.9290)">Herramientas</span>
<span class="t" style="left:395px;top:34.1px;font-size:11.3px;line-height:15px;font-weight:400;color:#1e1e1e;transform:scaleX(0.9565)">PhotoView 360</span>
<span class="t" style="left:482.5px;top:34.1px;font-size:11.3px;line-height:15px;font-weight:400;color:#1e1e1e;transform:scaleX(0.9405)">Ventana</span>
<span class="t" style="left:986px;top:34.1px;font-size:11.3px;line-height:15px;font-weight:400;color:#333;transform:scaleX(0.9835)">v...</span>
<span class="t" style="left:1032px;top:33.1px;font-size:11.3px;line-height:15px;font-weight:400;color:#777;transform:scaleX(0.8646)">Buscar c</span>
<span class="t" style="left:7.5px;top:59.1px;font-size:11.3px;line-height:15px;font-weight:400;color:#1e1e1e;transform:scaleX(0.9600)">Operaciones</span>
<span class="t" style="left:85px;top:59.1px;font-size:11.3px;line-height:15px;font-weight:400;color:#1e1e1e;transform:scaleX(0.9631)">Croquis</span>
<span class="t" style="left:138px;top:59.1px;font-size:11.3px;line-height:15px;font-weight:400;color:#1e1e1e;transform:scaleX(0.9483)">Superficies</span>
<span class="t" style="left:206.5px;top:59.1px;font-size:11.3px;line-height:15px;font-weight:400;color:#1e1e1e;transform:scaleX(0.9653)">Calcular</span>
<span class="t" style="left:266.5px;top:59.1px;font-size:11.3px;line-height:15px;font-weight:400;color:#1e1e1e;transform:scaleX(0.9705)">Herramientas de renderizado</span>
<span class="t" style="left:429.5px;top:59.1px;font-size:11.3px;line-height:15px;font-weight:400;color:#1e1e1e;transform:scaleX(0.9451)">Complementos de SOLIDWORKS</span>
<span class="t" style="left:606px;top:59.1px;font-size:11.3px;line-height:15px;font-weight:400;color:#1e1e1e;transform:scaleX(0.9587)">Preparación del análisis</span>
<span class="t" style="left:736.5px;top:59.1px;font-size:11.3px;line-height:15px;font-weight:400;color:#1e1e1e;transform:scaleX(0.9110)">SOLIDWORKS CAM</span>
<span class="t" style="left:850px;top:59.1px;font-size:11.3px;line-height:15px;font-weight:400;color:#1e1e1e;transform:scaleX(0.9906)">Flow Simulation</span>
<span class="t" style="left:25.5px;top:153.6px;font-size:11.3px;line-height:15px;font-weight:400;color:#1e1e1e;transform:scaleX(0.9357)">VASITO_MOLDE 2022  (Predeterminado&lt;</span>
<span class="t" style="left:47px;top:174.1px;font-size:11.3px;line-height:15px;font-weight:400;color:#1e1e1e;transform:scaleX(1.0046)">Historial</span>
<span class="t" style="left:47px;top:194.7px;font-size:11.3px;line-height:15px;font-weight:400;color:#1e1e1e;transform:scaleX(0.9748)">Conjuntos de selecciones</span>
<span class="t" style="left:47px;top:215.3px;font-size:11.3px;line-height:15px;font-weight:400;color:#1e1e1e;transform:scaleX(0.9008)">Sensores</span>
<span class="t" style="left:47px;top:235.9px;font-size:11.3px;line-height:15px;font-weight:400;color:#1e1e1e;transform:scaleX(0.9889)">Anotaciones</span>
<span class="t" style="left:47px;top:256.5px;font-size:11.3px;line-height:15px;font-weight:400;color:#1e1e1e;transform:scaleX(0.9817)">Conjuntos de superficies(3)</span>
<span class="t" style="left:47px;top:277.1px;font-size:11.3px;line-height:15px;font-weight:400;color:#1e1e1e;transform:scaleX(0.9536)">Sólidos(3)</span>
<span class="t" style="left:47px;top:297.7px;font-size:11.3px;line-height:15px;font-weight:400;color:#1e1e1e;transform:scaleX(0.9610)">PE Densidad baja/media</span>
<span class="t" style="left:47px;top:318.3px;font-size:11.3px;line-height:15px;font-weight:400;color:#1e1e1e;transform:scaleX(0.9697)">Alzado</span>
<span class="t" style="left:47px;top:338.9px;font-size:11.3px;line-height:15px;font-weight:400;color:#1e1e1e;transform:scaleX(0.9517)">Planta</span>
<span class="t" style="left:47px;top:359.5px;font-size:11.3px;line-height:15px;font-weight:400;color:#1e1e1e;transform:scaleX(0.9519)">Vista lateral</span>
<span class="t" style="left:47px;top:380.1px;font-size:11.3px;line-height:15px;font-weight:400;color:#1e1e1e;transform:scaleX(0.9876)">Origen</span>
<span class="t" style="left:47px;top:400.7px;font-size:11.3px;line-height:15px;font-weight:400;color:#1e1e1e;transform:scaleX(0.9292)">MODELO</span>
<span class="t" style="left:47px;top:421.3px;font-size:11.3px;line-height:15px;font-weight:400;color:#1e1e1e;transform:scaleX(0.8706)">Escala1</span>
<span class="t" style="left:47px;top:441.9px;font-size:11.3px;line-height:15px;font-weight:400;color:#1e1e1e;transform:scaleX(0.9728)">Línea de partición8</span>
<span class="t" style="left:47px;top:462.5px;font-size:11.3px;line-height:15px;font-weight:400;color:#1e1e1e;transform:scaleX(0.9568)">Superficie de separación1</span>
<span class="t" style="left:47px;top:483.1px;font-size:11.3px;line-height:15px;font-weight:400;color:#1e1e1e;transform:scaleX(0.9995)">Núcleo/Cavidad2</span>
<span class="t" style="left:47px;top:503.7px;font-size:11.3px;line-height:15px;font-weight:400;color:#1e1e1e;transform:scaleX(1.0067)">Sólido-Mover/Copiar1</span>
<span class="t" style="left:47px;top:524.3px;font-size:11.3px;line-height:15px;font-weight:400;color:#1e1e1e;transform:scaleX(1.0113)">Sólido-Mover/Copiar2</span>
<span class="t" style="left:74.5px;top:665.9px;font-size:11.3px;line-height:15px;font-weight:700;color:#111;transform:scaleX(0.9735)">Modelo</span>
<span class="t" style="left:131px;top:665.9px;font-size:11.3px;line-height:15px;font-weight:400;color:#1e1e1e;transform:scaleX(0.9140)">Vistas 3D</span>
<span class="t" style="left:195px;top:665.9px;font-size:11.3px;line-height:15px;font-weight:400;color:#1e1e1e;transform:scaleX(0.9943)">Estudio de movimiento 1</span>
<span class="t" style="left:1.5px;top:683.4px;font-size:11.3px;line-height:15px;font-weight:400;color:#1e1e1e;transform:scaleX(0.9060)">SOLIDWORKS Premium 2021 SP4.1</span>
<span class="t" style="left:956px;top:683.4px;font-size:11.3px;line-height:15px;font-weight:400;color:#1e1e1e;transform:scaleX(0.9474)">Editando Pieza</span>
<span class="t" style="left:1160px;top:683.4px;font-size:11.3px;line-height:15px;font-weight:400;color:#1e1e1e;transform:scaleX(0.9671)">MMGS</span>
</body>
</html>
